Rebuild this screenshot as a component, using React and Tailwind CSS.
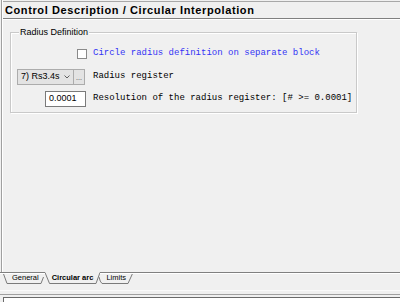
import React from "react";

const ui = { fontFamily: '"Liberation Sans", Arial, sans-serif' };
const mono = { fontFamily: '"Liberation Mono", "Courier New", monospace' };

function Chevron() {
  return (
    <svg width="6" height="4" viewBox="0 0 6 4" className="text-[#606060]">
      <path d="M0.5 0.5 L3 3 L5.5 0.5" fill="none" stroke="currentColor" strokeWidth="1" />
    </svg>
  );
}

function TabStrip() {
  return (
    <div className="relative h-[12px] shrink-0 text-black">
      {/* tab outlines */}
      <svg className="absolute inset-0" width="400" height="12" viewBox="0 0 400 12">
        <g fill="none" stroke="#7a7a7a" strokeWidth="1">
          <path d="M0 0.5 H45 M100 0.5 H400" stroke="#808080" />
          <path d="M3 0.5 L7 11.5 H41 L43.5 5" />
          <path d="M45 0.5 L49.5 11.5 H96 L100 0.5" />
          <path d="M99 5 Q100 10 102 11.5 H128 L133 0.5" />
        </g>
        <path d="M0 1.5 H45 M100 1.5 H400" stroke="#ffffff" strokeWidth="1" />
      </svg>
      <div className="relative flex items-center h-full text-[7.5px] leading-none">
        <span className="ml-[12px]">General</span>
        <span className="ml-[13px] font-bold">Circular arc</span>
        <span className="ml-[13px]">Limits</span>
      </div>
    </div>
  );
}

export default function App() {
  return (
    <div className="w-[400px] h-[302px] overflow-hidden bg-[#f0f0f0] flex flex-col" style={ui}>
      {/* page */}
      <div className="h-[272px] shrink-0 ml-[1px] border-l border-[#a0a0a0] flex flex-col">
        <div className="border-l border-white h-full flex flex-col">
          <div className="mt-[1px] h-[18px] shrink-0 border-t border-b border-t-[#a8a8a8] border-b-[#808080] flex items-center pl-[2px] text-[11px] tracking-[0.6px] font-bold text-black">
            Control Description / Circular Interpolation
          </div>
          <div className="h-px shrink-0 bg-white" />

          {/* group box */}
          <div className="relative shrink-0 mt-[12px] ml-[7px] w-[347px] h-[81px] border border-[#c9c9c9] shadow-[inset_1px_1px_0_#ffffff,1px_1px_0_#ffffff]">
            <span className="absolute -top-[7px] left-[8px] px-[1px] bg-[#f0f0f0] text-[9px] leading-[12px] text-black">
              Radius Definition
            </span>

            <div className="flex flex-col pt-[14px] pl-[6px]">
              <div className="flex items-center h-[13px] ml-[60px]">
                <span className="w-[10px] h-[10px] border border-[#8a8a8a] bg-white" />
                <span className="ml-[6px] text-[9px] text-[#3434f5]" style={mono}>
                  Circle radius definition on separate block
                </span>
              </div>

              <div className="flex items-center h-[16px] mt-[9px]">
                <div className="flex items-center justify-between w-[57px] h-[16px] border border-[#acacac] bg-[#e3e3e3] pl-[3px] pr-[3px] text-[9px] text-black">
                  <span>7) Rs3.4s</span>
                  <Chevron />
                </div>
                <div className="flex items-end justify-center w-[11px] h-[16px] border border-l-0 border-[#acacac] bg-[#e3e3e3] text-[7px] leading-[10px] text-[#404040] pb-[1px]">
                  ...
                </div>
                <span className="ml-[8px] text-[9px] text-black" style={mono}>
                  Radius register
                </span>
              </div>

              <div className="flex items-center h-[16px] mt-[6px]">
                <div className="ml-[28px] flex items-center w-[41px] h-[16px] border border-[#7a7a7a] bg-white pl-[3px] text-[9px] text-black">
                  0.0001
                </div>
                <span className="ml-[7px] text-[9px] text-black" style={mono}>
                  Resolution of the radius register: [# &gt;= 0.0001]
                </span>
              </div>
            </div>
          </div>
        </div>
      </div>

      <TabStrip />

      <div className="h-[6px] shrink-0" />
      <div className="h-px shrink-0 bg-[#fafafa]" />
      <div className="h-[3px] shrink-0" />
      <div className="h-px shrink-0 bg-[#a0a0a0]" />
      <div className="h-[2px] shrink-0" />
      <div className="h-[20px] shrink-0 ml-[3px] border-t border-l border-[#6a6a6a] bg-white pl-[4px] pt-[3px] text-[9px] leading-[12px] text-black">
        Description: Circular interpolation, radius definition
      </div>
    </div>
  );
}
